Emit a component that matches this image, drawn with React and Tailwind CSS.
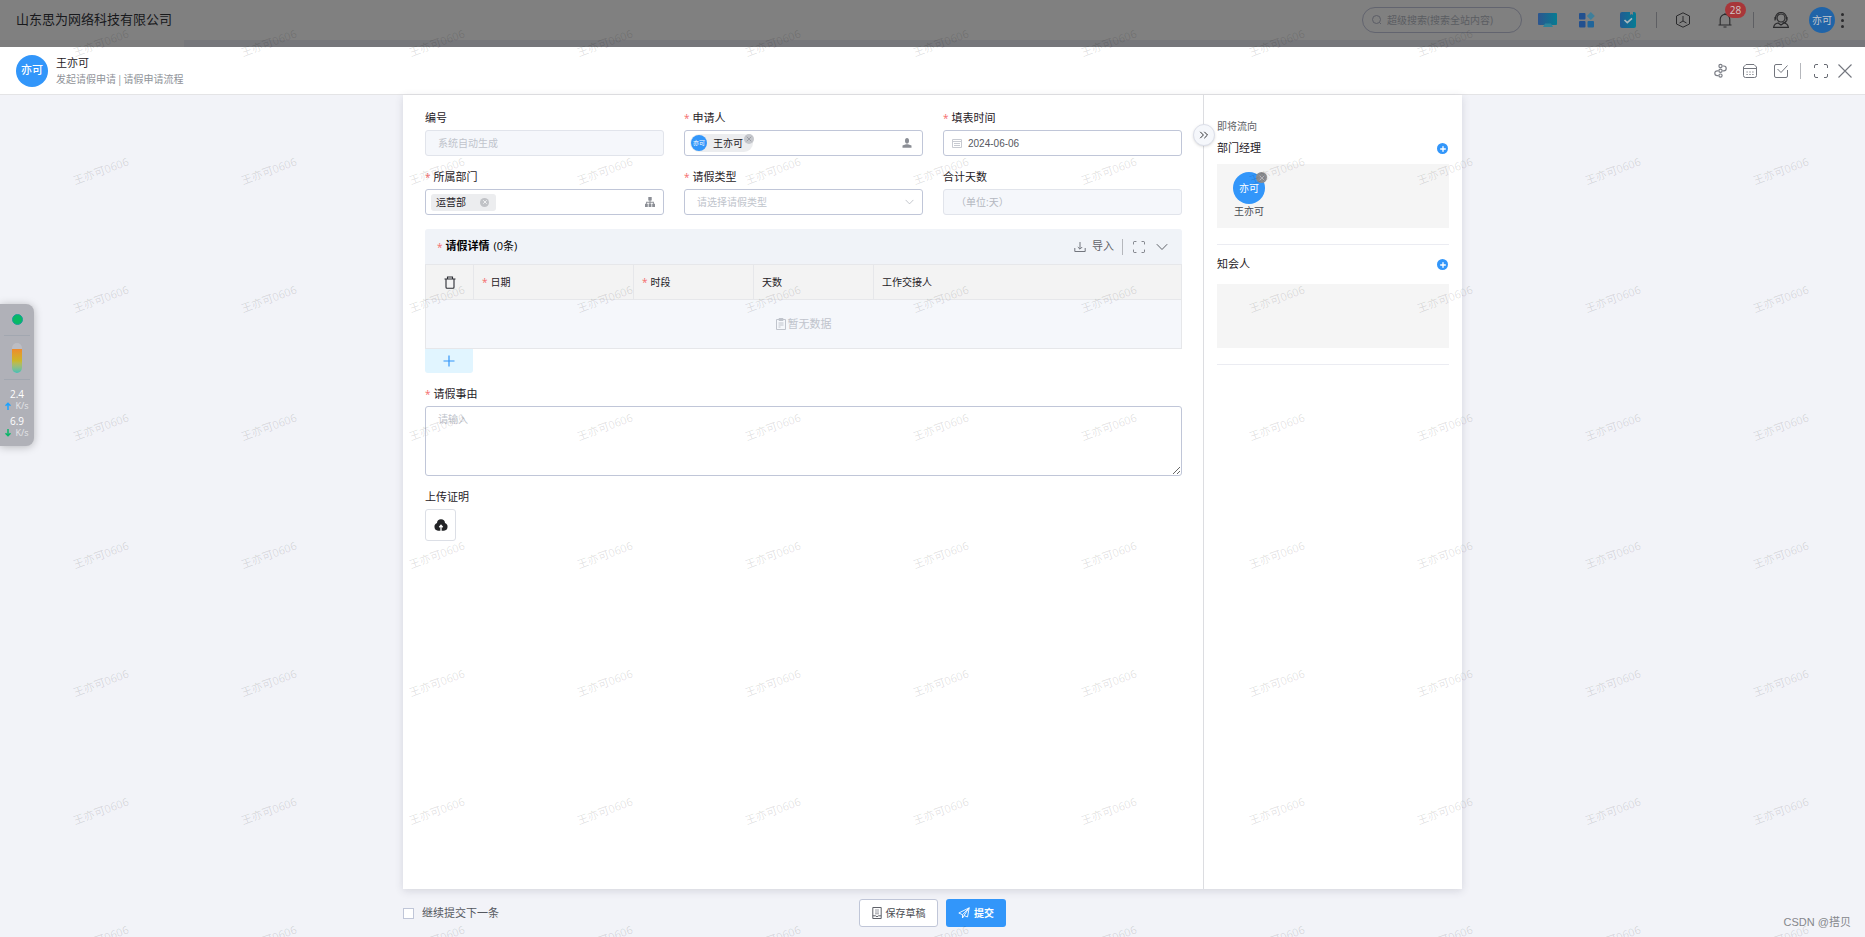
import React, { useState } from "react";
import { ChevronsRight, Plus, X } from "lucide-react";

const MARKS = Array.from({ length: 88 }, (_, i) => i);

/* ---------- icons ---------- */

const IconSearch = () => (
  <svg viewBox="0 0 12 12" className="size-3 text-[#5b5d66]" fill="none" stroke="currentColor">
    <circle cx="5.5" cy="5.5" r="4" />
    <path d="M8.6 8.6 10 10" />
  </svg>
);

const IconMonitor = () => (
  <svg viewBox="0 0 19 16" className="w-[19px] h-4">
    <defs>
      <linearGradient id="mon">
        <stop offset="0" stopColor="#2d558f" />
        <stop offset="1" stopColor="#067c92" />
      </linearGradient>
    </defs>
    <rect x="0" y="1" width="19" height="12" rx="1" fill="url(#mon)" />
    <path d="M7 11.5h6l2 3.500H5z" fill="#2c8399" />
  </svg>
);

const IconApps = () => (
  <svg viewBox="0 0 16 16" className="size-4" fill="#22508f">
    <rect x="0" y="1" width="6.500" height="6.500" rx="1" />
    <rect x="0" y="9" width="6.500" height="6.500" rx="1" />
    <rect x="8.500" y="9" width="6.500" height="6.500" rx="1" fill="#20659a" />
    <path d="M11.800 0 15.800 4l-4 4-4-4z" fill="#3f7f9b" />
  </svg>
);

const IconTask = () => (
  <svg viewBox="0 0 16 16" className="size-4">
    <defs>
      <linearGradient id="task">
        <stop offset="0" stopColor="#215b92" />
        <stop offset="1" stopColor="#057c94" />
      </linearGradient>
    </defs>
    <path d="M2 0h8v3l1.500-1L13 3V0h1a2 2 0 0 1 2 2v12a2 2 0 0 1-2 2H2a2 2 0 0 1-2-2V2a2 2 0 0 1 2-2z" fill="url(#task)" />
    <path d="m4.500 8 2.800 2.700L12 6.300" fill="none" stroke="#a9b8bf" strokeWidth="1.600" />
  </svg>
);

const IconHex = () => (
  <svg viewBox="0 0 16 16" className="size-4" fill="none" stroke="#2b2b2d" strokeWidth="1">
    <path d="M8 .8 14.500 4v8L8 15.200 1.500 12V4z" strokeLinejoin="round" />
    <path d="M8 4v5M8 9l-3.500 2M8 9l3.500 2" />
  </svg>
);

const IconBell = () => (
  <svg viewBox="0 0 16 16" className="size-4" fill="none" stroke="#2b2b2d" strokeWidth="1.100">
    <path d="M1.500 13h13M3.200 13V7.200a4.800 4.800 0 0 1 9.600 0V13M8 2.400V1M6.500 15h3" />
  </svg>
);

const IconHeadset = () => (
  <svg viewBox="0 0 16 16" className="size-4" fill="none" stroke="#2b2b2d" strokeWidth="1.200">
    <circle cx="8" cy="6" r="4" />
    <path d="M2.500 7.500V6a5.500 5.500 0 0 1 11 0v1.500M2 5v3.500M14 5v3.500M13.500 8.500c-.5 1.800-2 2.500-4 2.500M.6 15.400c.4-2.500 1.900-4 4.400-4.400l3 2 3-2c2.500.4 4 1.900 4.400 4.400z" />
  </svg>
);

const IconFlow = () => (
  <svg viewBox="0 0 13 15" className="w-[13px] h-[15px]" fill="none" stroke="#7b7e86" strokeWidth="1.200">
    <circle cx="6.500" cy="3" r="1.600" />
    <circle cx="6.500" cy="7.800" r="1.600" />
    <circle cx="6.500" cy="12.600" r="1.600" />
    <path d="M8.500 3h1.300a2.400 2.400 0 0 1 0 4.800H8.500M4.500 7.800H3.200a2.400 2.400 0 0 0 0 4.800h1.300" />
  </svg>
);

const IconCalendar = () => (
  <svg viewBox="0 0 14 14" className="size-3.5" fill="none" stroke="#73767e">
    <path d="M3 .5h8L13.500 3v8.500a2 2 0 0 1-2 2h-9a2 2 0 0 1-2-2V3zM.5 4.500h13" />
    <path d="M3.500 8h1.200M6.400 8h1.200M9.300 8h1.200M3.500 10.500h1.200M6.400 10.500h1.200M9.300 10.500h1.200" />
  </svg>
);

const IconCheckBox = () => (
  <svg viewBox="0 0 14 14" className="size-3.5" fill="none" stroke="#73767e">
    <path d="M8 .5H2A1.500 1.500 0 0 0 .5 2v10A1.500 1.500 0 0 0 2 13.500h10a1.500 1.500 0 0 0 1.500-1.500V6" />
    <path d="M3.500 5 7 8.500 13.500 1.500" />
  </svg>
);

const IconFullscreen = ({ className }) => (
  <svg viewBox="0 0 14 14" className={className} fill="none" stroke="#686b73">
    <path d="M.5 4V2A1.500 1.500 0 0 1 2 .5h2M10 .5h2A1.500 1.500 0 0 1 13.500 2v2M13.500 10v2a1.500 1.500 0 0 1-1.500 1.500h-2M4 13.500H2A1.500 1.500 0 0 1 .5 12v-2" />
  </svg>
);

const IconClose = () => (
  <svg viewBox="0 0 14 14" className="size-3.5" fill="none" stroke="#73767e" strokeWidth="1.100">
    <path d="M.5.5l13 13M13.500.5l-13 13" />
  </svg>
);

const IconDown = ({ className }) => (
  <svg viewBox="0 0 12 8" className={className} fill="none" stroke="currentColor">
    <path d="M.8 1.200 6 6.500l5.200-5.300" />
  </svg>
);

const IconDownload = () => (
  <svg viewBox="0 0 12 12" className="size-3" fill="none" stroke="#73767e">
    <path d="M6 1v7M3.800 6 6 8.200 8.200 6M.8 7v3.500h10.400V7" />
  </svg>
);

const IconTrash = () => (
  <svg viewBox="0 0 12 13" className="w-3 h-[13px]" fill="none" stroke="#2b2d33" strokeWidth="1.100">
    <path d="M.5 3h11M3.500 3V1h5v2M2 3v8.300a1 1 0 0 0 1 1h6a1 1 0 0 0 1-1V3" />
  </svg>
);

const IconAdd = () => (
  <svg viewBox="0 0 12 12" className="size-3" fill="none" stroke="#3296fa" strokeWidth="1.200">
    <path d="M6 .5v11M.5 6h11" />
  </svg>
);

const IconUser = () => (
  <svg viewBox="0 0 10 10" className="size-2.5" fill="#8b8e95">
    <ellipse cx="5" cy="2.800" rx="2" ry="2.800" />
    <path d="M.5 9.800V7.500L4 6.200h2l3.500 1.300v2.300z" />
  </svg>
);

const IconTree = () => (
  <svg viewBox="0 0 10 10" className="size-2.5" fill="#8b8e95">
    <path d="M3.300 0h3.400v3.400H5.500v1.400h3.400v2h1.100V10H7.200V6.800h.9v-1H5.500v1h.9V10H3.600V6.800h.9v-1H1.900v1h.9V10H0V6.800h1.100v-2h3.400V3.400H3.300z" />
  </svg>
);

const IconDate = () => (
  <svg viewBox="0 0 10 10" className="size-2.5 shrink-0" fill="none" stroke="#c8cbd2">
    <path d="M.5 1.500h9v8h-9zM.5 3.500h9M2 5.500h6M2 7.500h6" />
  </svg>
);

const IconEmpty = () => (
  <svg viewBox="0 0 10 12" className="w-2.5 h-3" fill="none" stroke="#c0c4cc">
    <path d="M.5 1.500h9v10h-9zM3 .5h4v2H3zM2.500 5h5M2.500 7h5M2.500 9h2" />
  </svg>
);

const IconUpload = () => (
  <svg viewBox="0 0 14 12" className="w-3.5 h-3">
    <path d="M7 .3a4 4 0 0 1 4 3.700 4 4 0 0 1-1 7.700H4A4 4 0 0 1 3 4 4 4 0 0 1 7 .3z" fill="#222326" />
    <path d="M7 12V7.500M5.300 8.200 7 6.300l1.700 1.900" stroke="#fff" strokeWidth="1.300" fill="none" />
  </svg>
);

const IconDraft = () => (
  <svg viewBox="0 0 10 12" className="w-2.5 h-3" fill="none" stroke="#5f6269">
    <path d="M.8.500h8.400v11H.8zM.8 8.800h2.700l1.500 1 1.500-1h2.700" />
    <path d="M3 3h4M3 5h4M3 6.800h4" stroke="#9a9ca2" />
  </svg>
);

const IconSend = () => (
  <svg viewBox="0 0 12 12" className="size-3" fill="none" stroke="#fff" strokeWidth=".9" strokeLinejoin="round">
    <path d="M.8 6 11.200.8 9.500 10 6 8.500 4.500 11V7.700zM4.500 7.700 11.200.8 6 8.500" />
  </svg>
);

/* ---------- shared pieces ---------- */

const FIELD = "h-[26px] rounded-[3px] border text-[10px]";

function Label({ id, required, children }) {
  return (
    <label htmlFor={id} className="flex h-6 items-center gap-[3px] text-[11px] text-[#1f2126]">
      {required && <span className="text-[#f56c6c] text-[10px] leading-none">*</span>}
      {children}
    </label>
  );
}

function PlusButton({ label }) {
  return (
    <button aria-label={label} className="mr-px flex size-[11px] items-center justify-center rounded-full bg-[#3296fa] text-white">
      <Plus className="size-2" strokeWidth={4} />
    </button>
  );
}

function TopBar() {
  return (
    <header className="flex h-10 shrink-0 items-center bg-[#808080] pl-4 pr-[15px] shadow-[0_1px_2px_#66677a]">
      <h1 className="flex-1 text-[13px] text-[#18191c]">山东思为网络科技有限公司</h1>
      <label className="flex h-[26px] w-40 items-center gap-1 rounded-full border border-[#62646f] px-2">
        <IconSearch />
        <input
          aria-label="超级搜索"
          placeholder="超级搜索(搜索全站内容)"
          className="min-w-0 flex-1 bg-transparent text-[10px] outline-none placeholder:text-[#5b5d62]"
        />
      </label>
      <button aria-label="桌面" className="ml-4"><IconMonitor /></button>
      <button aria-label="应用" className="ml-[22px]"><IconApps /></button>
      <button aria-label="任务" className="ml-[25px]"><IconTask /></button>
      <span className="ml-5 h-4 w-px bg-[#5e5f63]" />
      <button aria-label="组织" className="ml-[18px]"><IconHex /></button>
      <button aria-label="通知" className="relative ml-[26px]">
        <IconBell />
        <span className="absolute -top-2.5 left-2 flex h-4 w-[21px] items-center justify-center rounded-full bg-[#a83639] text-[10px] text-[#d0c6c6]">
          28
        </span>
      </button>
      <span className="ml-5 h-4 w-px bg-[#5e5f63]" />
      <button aria-label="客服" className="ml-[19px]"><IconHeadset /></button>
      <button className="ml-5 size-[26px] rounded-full bg-[#2064a8] text-[10px] text-[#c0c6cc]">亦可</button>
      <button aria-label="更多" className="ml-1.5 flex flex-col gap-[3px] pr-1.5">
        <i className="size-[3px] rounded-full bg-[#2b2b2d]" />
        <i className="size-[3px] rounded-full bg-[#2b2b2d]" />
        <i className="size-[3px] rounded-full bg-[#2b2b2d]" />
      </button>
    </header>
  );
}

function DialogHeader() {
  return (
    <div className="flex h-12 shrink-0 items-center border-b border-[#e4e4e6] bg-white pl-4 pr-[13px]">
      <span className="flex size-8 items-center justify-center rounded-full bg-[#3296fa] text-[11px] font-medium text-white">亦可</span>
      <div className="ml-2 flex-1">
        <div className="text-[11px] leading-4 text-[#1f2126]">王亦可</div>
        <div className="flex gap-px text-[10px] leading-4 text-[#909399]">
          <span>发起请假申请</span>|<span>请假申请流程</span>
        </div>
      </div>
      <button aria-label="流程"><IconFlow /></button>
      <button aria-label="日程" className="ml-4"><IconCalendar /></button>
      <button aria-label="待办" className="ml-[17px]"><IconCheckBox /></button>
      <span className="ml-3 h-4 w-px bg-[#b5b7bc]" />
      <button aria-label="全屏" className="ml-[13px]"><IconFullscreen className="size-3.5" /></button>
      <button aria-label="关闭" className="ml-2.5"><IconClose /></button>
    </div>
  );
}

function DetailTable() {
  return (
    <section className="mt-[14px]">
      <div className="flex h-[35px] items-center rounded-t-[3px] bg-[#f0f3f8] pl-3 pr-3.5 text-[11px]">
        <span className="mr-[3px] text-[10px] leading-none text-[#f56c6c]">*</span>
        <h2 className="font-bold text-black">请假详情</h2>
        <span className="ml-1 text-black">(0条)</span>
        <div className="ml-auto flex items-center text-[#5f6269]">
          <button className="flex items-center gap-1.5"><IconDownload />导入</button>
          <span className="ml-2 h-4 w-px bg-[#b5b7bc]" />
          <button aria-label="全屏编辑" className="ml-2.5"><IconFullscreen className="size-3" /></button>
          <button aria-label="收起" className="ml-[11px]"><IconDown className="h-2 w-3" /></button>
        </div>
      </div>
      <table className="w-full table-fixed border-collapse border border-[#e6e7ea] text-[10px] text-[#1f2126]">
        <thead>
          <tr className="h-[35px] bg-[#f3f3f3] text-left [&>th]:border-r [&>th]:border-[#e6e7ea] [&>th]:font-normal [&>th]:px-2">
            <th className="w-12">
              <button aria-label="删除" className="mx-auto block"><IconTrash /></button>
            </th>
            <th className="w-40"><span className="mr-[3px] text-[#f56c6c]">*</span>日期</th>
            <th className="w-[120px]"><span className="mr-[3px] text-[#f56c6c]">*</span>时段</th>
            <th className="w-[120px]">天数</th>
            <th>工作交接人</th>
          </tr>
        </thead>
        <tbody>
          <tr className="h-[49px] border-t border-[#e6e7ea] bg-[#f5f7fb]">
            <td colSpan={5}>
              <div className="flex items-center justify-center gap-0.5 text-[11px] text-[#c0c4cc]"><IconEmpty />暂无数据</div>
            </td>
          </tr>
        </tbody>
      </table>
      <button aria-label="添加一行" className="flex h-6 w-12 items-center justify-center rounded-b-[3px] bg-[#e1f5ff]">
        <IconAdd />
      </button>
    </section>
  );
}

function LeaveForm() {
  return (
    <form className="min-w-0 flex-1 pl-[22px] pr-[21px] pt-[11px]">
      <div className="grid grid-cols-3 gap-x-5 gap-y-[9px]">
        <div>
          <Label id="no">编号</Label>
          <input id="no" disabled placeholder="系统自动生成" className={`${FIELD} block w-full border-[#e1e4eb] bg-[#f5f7fb] px-3 placeholder:text-[#c0c4cc]`} />
        </div>
        <div>
          <Label id="applicant" required>申请人</Label>
          <div className={`${FIELD} flex items-center border-[#c0c6d8] pl-[5px] pr-2.5`}>
            <span className="relative flex h-[18px] items-center gap-1.5 rounded-full bg-[#ecedef] pr-2.5 pl-px text-[#1f2126]">
              <span className="flex size-4 items-center justify-center rounded-full bg-[#3296fa] text-[6px] text-white">亦可</span>
              王亦可
              <button type="button" aria-label="移除王亦可" className="absolute -right-px top-0 flex size-2.5 items-center justify-center rounded-full bg-[#c5c7cc] text-[#888b92]">
                <X className="size-2" />
              </button>
            </span>
            <input id="applicant" className="min-w-0 flex-1 outline-none" />
            <IconUser />
          </div>
        </div>
        <div>
          <Label id="date" required>填表时间</Label>
          <div className={`${FIELD} flex items-center gap-1.5 border-[#c0c6d8] px-2`}>
            <IconDate />
            <input id="date" defaultValue="2024-06-06" className="min-w-0 flex-1 font-['Liberation_Sans'] text-[10px] text-[#55585f] outline-none" />
          </div>
        </div>
        <div>
          <Label id="dept" required>所属部门</Label>
          <div className={`${FIELD} flex items-center border-[#c0c6d8] pl-[5px] pr-2`}>
            <span className="flex h-[17px] items-center gap-3.5 rounded-[3px] bg-[#ecedef] pl-[5px] pr-[7px] text-[#1f2126]">
              运营部
              <button type="button" aria-label="移除运营部" className="flex size-[9px] items-center justify-center rounded-full bg-[#c0c2c6] text-white">
                <X className="size-1.5" strokeWidth={3} />
              </button>
            </span>
            <input id="dept" className="min-w-0 flex-1 outline-none" />
            <IconTree />
          </div>
        </div>
        <div>
          <Label id="type" required>请假类型</Label>
          <div className={`${FIELD} flex items-center border-[#c0c6d8] pr-2`}>
            <select id="type" className="min-w-0 flex-1 appearance-none bg-transparent pl-3 text-[#c0c4cc] outline-none">
              <option>请选择请假类型</option>
            </select>
            <IconDown className="h-1.5 w-[9px] text-[#b0b4bc]" />
          </div>
        </div>
        <div>
          <Label id="days">合计天数</Label>
          <input id="days" disabled placeholder="（单位:天）" className={`${FIELD} block w-full border-[#e1e4eb] bg-[#f5f7fb] px-3 placeholder:text-[#b4b8c0]`} />
        </div>
      </div>

      <DetailTable />

      <div className="mt-[9px]">
        <Label id="reason" required>请假事由</Label>
        <textarea id="reason" placeholder="请输入" className="block h-[70px] w-full resize-y rounded-[3px] border border-[#c0c6d8] px-3 py-1 text-[10px] leading-4 outline-none placeholder:text-[#c0c4cc]" />
      </div>
      <div className="mt-[9px]">
        <Label id="proof">上传证明</Label>
        <button id="proof" type="button" className="flex h-8 w-[31px] items-center justify-center rounded-[3px] border border-[#dcdfe6]">
          <IconUpload />
        </button>
      </div>
    </form>
  );
}

function FlowPanel() {
  return (
    <aside className="relative w-[259px] shrink-0 border-l border-[#dcdde1] px-[13px] pt-[22px]">
      <button aria-label="收起侧栏" className="absolute -left-[11px] top-[29px] flex size-[22px] items-center justify-center rounded-full border border-[#dcdfe9] bg-[#f5f7fb] text-[#303133] shadow-sm">
        <ChevronsRight className="size-3.5" strokeWidth={1.7} />
      </button>
      <div className="h-[18px] text-[10px] leading-[18px] text-[#606266]">即将流向</div>
      <div className="flex h-[29px] items-center justify-between pb-0.5 text-[11px] text-[#1f2126]">
        部门经理
        <PlusButton label="添加部门经理" />
      </div>
      <div className="h-16 bg-[#f5f5f5] px-4 pt-2">
        <div className="flex w-8 flex-col items-center">
          <span className="relative flex size-8 items-center justify-center rounded-full bg-[#3296fa] text-[10px] text-white">
            亦可
            <button aria-label="移除" className="absolute -right-0.5 top-0 flex size-[11px] items-center justify-center rounded-full bg-[#8a8c90] text-[#d0d2d6]">
              <X className="size-2" />
            </button>
          </span>
          <span className="whitespace-nowrap text-[10px] leading-[15px] text-[#4a4c52]">王亦可</span>
        </div>
      </div>
      <hr className="mt-4 border-[#ebecf2]" />
      <div className="flex h-[39px] items-center justify-between text-[11px] text-[#1f2126]">
        知会人
        <PlusButton label="添加知会人" />
      </div>
      <div className="h-16 bg-[#f5f5f5]" />
      <hr className="mt-4 border-[#ebecf2]" />
    </aside>
  );
}

function Speed({ value, up }) {
  return (
    <div className="mb-[5px] text-center text-white">
      <div className="text-[10px] leading-[11px]">{value}</div>
      <div className="flex items-center justify-center gap-1 text-[9px] leading-[11px] text-[#e4e5e8]">
        <svg viewBox="0 0 6 8" className="h-2 w-1.5" fill="none" stroke={up ? "#1ba2ff" : "#0ab568"} strokeWidth="1.500">
          {up ? <path d="M3 8V1M.5 3.800 3 1.300 5.500 3.800" /> : <path d="M3 0v7M.5 4.200 3 6.700 5.500 4.200" />}
        </svg>
        K/s
      </div>
    </div>
  );
}

// floating system monitor docked on the left edge
function SpeedWidget() {
  return (
    <div className="absolute left-0 top-[304px] flex h-[142px] w-[34px] flex-col items-center rounded-r-lg bg-[#b0b1b8] pt-[10px] shadow-[0_1px_8px_rgba(0,0,0,0.25)]">
      <span className="size-[11px] shrink-0 rounded-full border border-[#1a9c9c] bg-[#07b964]" />
      <span className="mt-[10px] h-px w-[26px] shrink-0 bg-[#a2a7b0]" />
      <span className="mt-[7px] h-[30px] w-[10px] shrink-0 overflow-hidden rounded-full bg-[#bcbdc4] pt-1.5">
        <span className="block h-6 bg-linear-to-b from-[#ee8a2c] via-[#c9b82a] to-[#3ebfb5]" />
      </span>
      <span className="mb-[9px] mt-[6px] h-px w-[26px] shrink-0 bg-[#a2a7b0]" />
      <Speed value="2.4" up />
      <Speed value="6.9" />
    </div>
  );
}

function Watermark() {
  return (
    <div className="pointer-events-none absolute inset-0 overflow-hidden">
      <div className="-mt-[21px] ml-[17px] grid w-max grid-cols-[repeat(11,168px)] auto-rows-[128px]">
        {MARKS.map((i) => (
          <span key={i} className="flex items-center justify-center">
            <span className="-rotate-20 text-[11px] text-black/12">王亦可0606</span>
          </span>
        ))}
      </div>
    </div>
  );
}

export default function App() {
  const [next, setNext] = useState(false);

  return (
    <div className="relative flex h-screen flex-col overflow-hidden bg-[#f2f3f8] font-['Open_Sans','Noto_Sans_CJK_SC',sans-serif]">
      <TopBar />
      <div className="flex h-[7px] shrink-0 bg-[#76777b]">
        <span className="w-[184px] bg-[#7d7d7e]" />
      </div>
      <DialogHeader />

      <main className="mx-auto flex min-h-0 w-full max-w-[1059px] flex-1 bg-white shadow-[0_2px_8px_rgba(60,60,90,0.16)]">
        <LeaveForm />
        <FlowPanel />
      </main>

      <footer className="mx-auto grid h-12 w-full max-w-[1059px] shrink-0 grid-cols-3 items-center text-[10px]">
        <label className="flex items-center gap-2 text-[11px] text-[#55585f]">
          <input
            type="checkbox"
            checked={next}
            onChange={(e) => setNext(e.target.checked)}
            className="size-[11px] appearance-none border border-[#c0c6d8] bg-white checked:bg-[#3296fa]"
          />
          继续提交下一条
        </label>
        <div className="flex justify-center gap-2">
          <button className="flex h-7 w-[79px] items-center justify-center gap-1 rounded-[3px] border border-[#c0c6d8] bg-white text-[#4a4c52]">
            <IconDraft />保存草稿
          </button>
          <button className="flex h-7 w-[60px] items-center justify-center gap-1 rounded-[3px] bg-[#3296fa] font-bold text-white">
            <IconSend />提交
          </button>
        </div>
      </footer>

      <SpeedWidget />
      <Watermark />
      <div className="absolute bottom-[7px] right-[14px] font-['Liberation_Sans','Noto_Sans_CJK_SC',sans-serif] text-[11px] text-[#85878c]">
        CSDN @搭贝
      </div>
    </div>
  );
}
